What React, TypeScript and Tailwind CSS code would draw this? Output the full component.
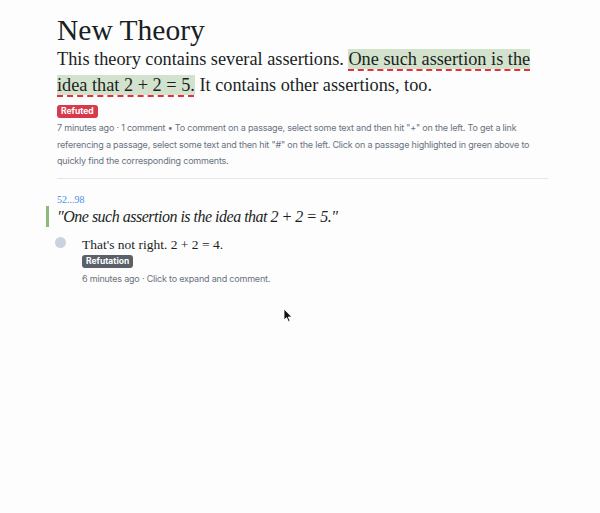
import React from 'react'

const serif = "font-['Liberation_Serif','Times_New_Roman',serif]"
const sans = "font-['Inter','Liberation_Sans',sans-serif]"

const App = () => {
  return (
    <div className="relative h-[513px] w-[600px] overflow-hidden bg-[#fdfdfe] text-[#1b1f23]">
      <div className="pl-[57px] pr-[52px] pt-[12px]">
        <h1 className={`${serif} text-[29.5px] leading-[36px]`}>New Theory</h1>
        <p className={`${serif} mt-[-2px] text-[18.3px] leading-[26px]`}>
          This theory contains several assertions.{' '}
          <span className="bg-[#d3e2cd] underline decoration-[#e8303a] decoration-dashed decoration-[1.5px] underline-offset-[4px]">
            One such assertion is the idea that 2 + 2 = 5.
          </span>{' '}
          It contains other assertions, too.
        </p>
        <div className="mt-[7px] flex">
          <span className={`${sans} rounded-[3px] bg-[#d73a49] px-[4px] text-[8.5px] font-bold leading-[13px] text-white`}>
            Refuted
          </span>
        </div>
        <p className={`${sans} mt-[2px] text-[9px] leading-[16.5px] tracking-[-0.2px] text-[#6a737d]`}>
          7 minutes ago · 1 comment • To comment on a passage, select some text and then hit "+" on the left. To get a link referencing a passage, select some text and then hit "#" on the left. Click on a passage highlighted in green above to quickly find the corresponding comments.
        </p>
        <div className="mt-[8px] h-px bg-[#e4e6e8]" />
        <div className={`${serif} mt-[15px] text-[10px] leading-[12px] text-[#4a90e2]`}>52...98</div>
        <div className="relative">
          <div className="absolute left-[-11px] top-0 h-[21px] w-[3px] bg-[#8cbb79]" />
          <p className={`${serif} text-[16px] italic leading-[21px] tracking-[-0.5px]`}>
            "One such assertion is the idea that 2 + 2 = 5."
          </p>
        </div>
        <div className="mt-[10px] ml-[-2px] flex gap-[16px]">
          <div className="h-[11px] w-[11px] shrink-0 rounded-full bg-[#c9d3df]" />
          <div className="flex flex-col items-start">
            <p className={`${serif} text-[13.5px] leading-[15px]`}>That's not right. 2 + 2 = 4.</p>
            <span className={`${sans} mt-[3px] rounded-[3px] bg-[#5b6168] px-[4px] text-[8.5px] font-bold leading-[13px] text-white`}>
              Refutation
            </span>
            <p className={`${sans} mt-[3px] text-[9px] leading-[15px] tracking-[-0.2px] text-[#6a737d]`}>
              6 minutes ago · Click to expand and comment.
            </p>
          </div>
        </div>
      </div>
      <svg className="absolute left-[283px] top-[308px]" width="10" height="15" viewBox="0 0 10 15">
        <path d="M1 1 L1 12 L3.6 9.6 L5.4 13.6 L7 12.9 L5.3 9 L8.8 9 Z" fill="#111" stroke="#fff" strokeWidth="0.8" />
      </svg>
    </div>
  )
}

export default App
